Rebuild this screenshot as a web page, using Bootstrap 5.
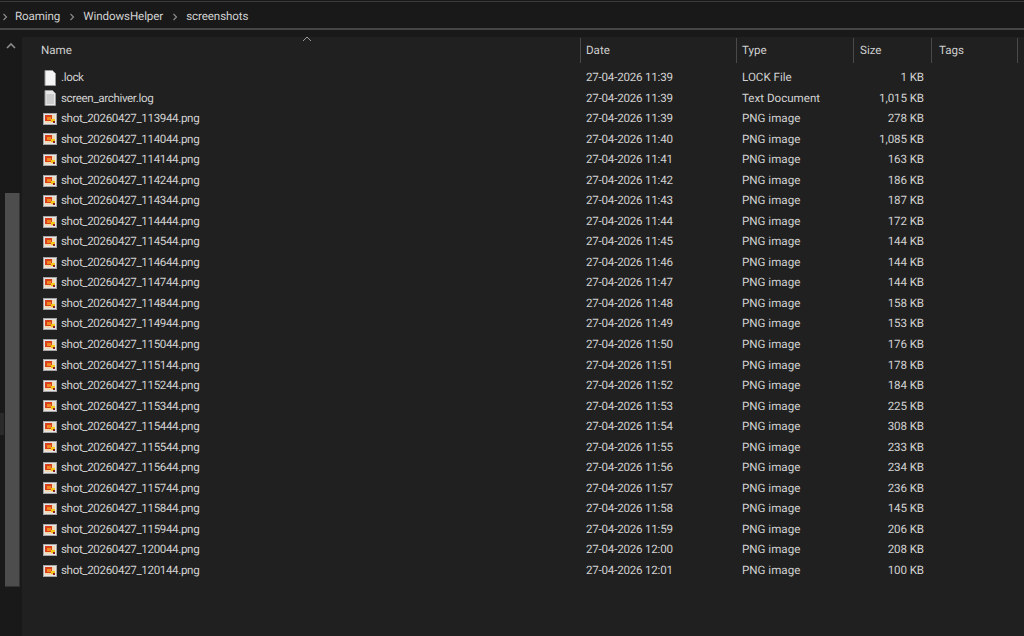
<!DOCTYPE html>
<html lang="en">
<head>
    <meta charset="UTF-8">
    <title>screenshots</title>
    <link rel="stylesheet" href="https://cdn.jsdelivr.net/npm/bootstrap@5.3.0/dist/css/bootstrap.min.css">
    <script src="https://cdn.jsdelivr.net/npm/bootstrap@5.3.0/dist/js/bootstrap.bundle.min.js"></script>
    <style>
        html, body { height: 100%; overflow: hidden; }
        body {
            background: #191919;
            color: #d2d2d2;
            font-family: Roboto, "Liberation Sans", sans-serif;
            font-size: 11.6px;
            line-height: 1;
            text-rendering: geometricPrecision;
        }
        .topline { height: 3px; background: #191919; border-top: 1px solid #3a3a3a; margin-top: 1px; }
        .crumbs { height: 26px; padding: 2px 0 0 2px; background: #191919; border-bottom: 2px solid #454545; letter-spacing: -0.1px; }
        .crumbs svg { flex: none; }
        .crumb-first { margin-left: 7px; }
        .crumb-sep { margin: 0 8px 0 9px; }
        .main-area { height: 606px; }
        .side { width: 22px; background: #191919; position: relative; }
        .side-up { height: 24px; padding-top: 13px; }
        .thumb-gap { height: 139px; }
        .thumb { width: 15px; height: 394px; margin-left: 5px; background: #4d4d4d; border-right: 1px solid #333; border-bottom: 1px solid #333; }
        .side-mark { position: absolute; left: 0; top: 383px; width: 4px; height: 22px; background: #2a2a2a; }
        .pane { background: #202020; margin-top: 7px; min-width: 0; }
        .head-row { height: 30.6px; padding-top: 1px; position: relative; }
        .sort-mark { position: absolute; left: 280px; top: -1px; }
        .head-cell { height: 25px; display: flex; align-items: center; color: #cfcfcf; border-right: 1px solid #4a4a4a; }
        .file-row { height: 20.54px; }
        .cell-name { width: 559px; padding-left: 21px; flex: none; }
        .cell-date { width: 156px; padding-left: 5px; flex: none; }
        .cell-type { width: 117px; padding-left: 5px; flex: none; }
        .cell-size { width: 78px; padding-right: 8px; text-align: right; flex: none; }
        .cell-tags { width: 86px; padding-left: 7px; flex: none; }
        .head-cell.cell-name { padding-left: 19px; }
        .head-cell.cell-size { padding-left: 6px; }
        .icon-slot { width: 18px; flex: none; display: flex; align-items: center; }
        .name-text { letter-spacing: -0.36px; }
        .file-row .cell-date { letter-spacing: -0.22px; }
        .file-row .cell-size { letter-spacing: -0.1px; }
    </style>
</head>
<body>
    <div class="topline"></div>
    <div class="crumbs d-flex align-items-center">
        <svg width="6" height="8" viewBox="0 0 6 8"><path d="M1.5 1 4.5 4 1.5 7" fill="none" stroke="#8a8a8a" stroke-width="1.2"/></svg>
        <span class="crumb-first">Roaming</span>
        <svg class="crumb-sep" width="6" height="8" viewBox="0 0 6 8"><path d="M1.5 1 4.5 4 1.5 7" fill="none" stroke="#8a8a8a" stroke-width="1.2"/></svg>
        <span>WindowsHelper</span>
        <svg class="crumb-sep" width="6" height="8" viewBox="0 0 6 8"><path d="M1.5 1 4.5 4 1.5 7" fill="none" stroke="#8a8a8a" stroke-width="1.2"/></svg>
        <span>screenshots</span>
    </div>
    <div class="main-area d-flex">
        <div class="side flex-shrink-0">
            <div class="side-mark"></div>
            <div class="side-up d-flex justify-content-center">
                <svg width="10" height="6" viewBox="0 0 10 6"><path d="M1 5 5 1 9 5" fill="none" stroke="#8f8f8f" stroke-width="1.6"/></svg>
            </div>
            <div class="thumb-gap"></div>
            <div class="thumb"></div>
        </div>
        <div class="pane flex-grow-1">
            <div class="head-row d-flex">
                <svg class="sort-mark" width="10" height="6" viewBox="0 0 10 6"><path d="M1 5 5 1 9 5" fill="none" stroke="#9a9a9a" stroke-width="1"/></svg>
                <div class="head-cell cell-name">Name</div>
                <div class="head-cell cell-date">Date</div>
                <div class="head-cell cell-type">Type</div>
                <div class="head-cell cell-size">Size</div>
                <div class="head-cell cell-tags">Tags</div>
            </div>
            <div id="files"></div>
        </div>
    </div>

    <script>
        var blank = '<svg width="14" height="16" viewBox="0 0 14 16"><path d="M2 .5h7.5l3 3v12h-10.500z" fill="#f4f4f4" stroke="#9a9a9a"/></svg>';
        var text = '<svg width="14" height="16" viewBox="0 0 14 16"><path d="M2 .5h7.500l3 3v12h-10.500z" fill="#e8e8e8" stroke="#9a9a9a"/><path d="M3.500 5h7.500M3.500 7h7.500M3.500 9h7.500M3.500 11h7.500M3.500 13h7.500" stroke="#b0b0b0"/></svg>';
        var png = '<svg width="14" height="12" viewBox="0 0 14 12"><rect x=".5" y=".5" width="13" height="11" fill="#e6e6e6" stroke="#a5a5a5"/><rect x="2" y="2" width="10" height="8" fill="#f3d9b0"/><rect x="2" y="2" width="7" height="6" fill="#d8401c"/><rect x="4" y="4" width="4" height="3" fill="#f08a20"/><rect x="8" y="6" width="4" height="3" fill="#f5c518"/><rect x="10" y="8" width="2" height="2" fill="#8a1f1f"/></svg>';
        var files = [
            ['.lock', '11:39', 'LOCK File', '1 KB', blank],
            ['screen_archiver.log', '11:39', 'Text Document', '1,015 KB', text],
            ['113944', '11:39', '', '278 KB'], ['114044', '11:40', '', '1,085 KB'], ['114144', '11:41', '', '163 KB'],
            ['114244', '11:42', '', '186 KB'], ['114344', '11:43', '', '187 KB'], ['114444', '11:44', '', '172 KB'],
            ['114544', '11:45', '', '144 KB'], ['114644', '11:46', '', '144 KB'], ['114744', '11:47', '', '144 KB'],
            ['114844', '11:48', '', '158 KB'], ['114944', '11:49', '', '153 KB'], ['115044', '11:50', '', '176 KB'],
            ['115144', '11:51', '', '178 KB'], ['115244', '11:52', '', '184 KB'], ['115344', '11:53', '', '225 KB'],
            ['115444', '11:54', '', '308 KB'], ['115544', '11:55', '', '233 KB'], ['115644', '11:56', '', '234 KB'],
            ['115744', '11:57', '', '236 KB'], ['115844', '11:58', '', '145 KB'], ['115944', '11:59', '', '206 KB'],
            ['120044', '12:00', '', '208 KB'], ['120144', '12:01', '', '100 KB']
        ];
        document.getElementById('files').innerHTML = files.map(function (f) {
            var name = f[4] ? f[0] : 'shot_20260427_' + f[0] + '.png';
            return '<div class="file-row d-flex align-items-center">' +
                '<div class="cell-name d-flex align-items-center"><span class="icon-slot">' + (f[4] || png) + '</span><span class="name-text">' + name + '</span></div>' +
                '<div class="cell-date">27-04-2026 ' + f[1] + '</div>' +
                '<div class="cell-type">' + (f[2] || 'PNG image') + '</div>' +
                '<div class="cell-size">' + f[3] + '</div>' +
                '<div class="cell-tags"></div></div>';
        }).join('');
    </script>
</body>
</html>
